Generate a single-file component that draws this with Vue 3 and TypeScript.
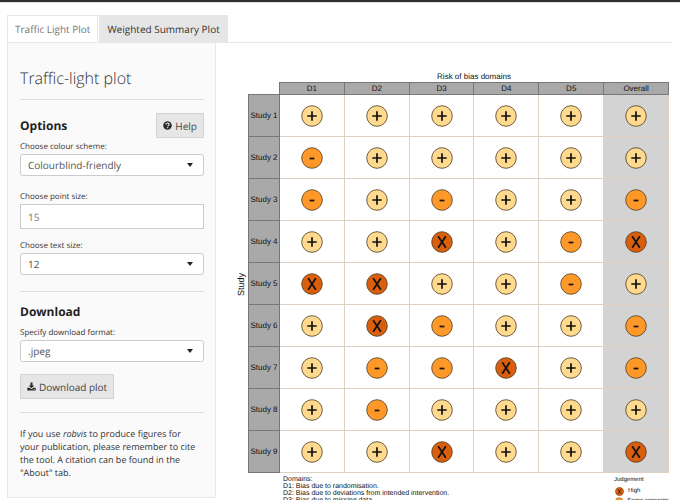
<script setup lang="ts">
import { ref } from 'vue'

type Judgement = '+' | '-' | 'X'

const domains: string[] = ['D1', 'D2', 'D3', 'D4', 'D5', 'Overall']

const studies: { name: string; marks: Judgement[] }[] = [
  '++++++',
  '-+++++',
  '-+-++-',
  '++X+-X',
  'XX++-+',
  '+X-++-',
  '+--X+-',
  '+-++++',
  '++X++X',
].map((row, i) => ({ name: `Study ${i + 1}`, marks: row.split('') as Judgement[] }))

const levels: Record<Judgement, string> = { '+': 'low', '-': 'some', X: 'high' }

const notes: string[] = [
  'D1: Bias due to randomisation.',
  'D2: Bias due to deviations from intended intervention.',
  'D3: Bias due to missing data.',
]

const legend: { mark: Judgement; label: string }[] = [
  { mark: 'X', label: 'High' },
  { mark: '-', label: 'Some concerns' },
]

const scheme = ref('Colourblind-friendly')
const pointSize = ref('15')
const textSize = ref('12')
const format = ref('.jpeg')
</script>

<template>
  <div class="page">
    <div class="navbar"></div>
    <nav class="tabs">
      <a href="#traffic" class="tab active">Traffic Light Plot</a>
      <a href="#summary" class="tab">Weighted Summary Plot</a>
    </nav>
    <div class="content">
      <aside class="sidebar">
        <h1>Traffic-light plot</h1>
        <hr />
        <div class="heading-row">
          <h2>Options</h2>
          <button type="button" class="btn">
            <svg class="icon" viewBox="0 0 16 16" aria-hidden="true">
              <circle cx="8" cy="8" r="7.6" fill="#2b2b2b" />
              <path d="M5.2 6.1C5.3 4.3 6.5 3.5 8.1 3.5c1.600 0 2.800.9 2.800 2.400 0 1.900-2.500 2-2.500 3.500" fill="none" stroke="#eee" stroke-width="2" />
              <circle cx="8.300" cy="11.800" r="1.300" fill="#eee" />
            </svg>
            Help
          </button>
        </div>
        <label for="scheme">Choose colour scheme:</label>
        <div class="select">
          <select id="scheme" v-model="scheme">
            <option>Colourblind-friendly</option>
            <option>Cochrane</option>
          </select>
        </div>
        <label for="point" class="next">Choose point size:</label>
        <input id="point" v-model="pointSize" type="text" inputmode="numeric" />
        <label for="text" class="after-input">Choose text size:</label>
        <div class="select">
          <select id="text" v-model="textSize">
            <option>12</option>
            <option>14</option>
          </select>
        </div>
        <hr class="mid" />
        <h2 class="download">Download</h2>
        <label for="format" class="format-label">Specify download format:</label>
        <div class="select">
          <select id="format" v-model="format">
            <option>.jpeg</option>
            <option>.png</option>
          </select>
        </div>
        <button type="button" class="btn save">
          <svg class="icon" viewBox="0 0 16 16" aria-hidden="true">
            <path d="M6.200 1h3.600v5h3.200L8 11 3 6h3.200z" fill="#2b2b2b" />
            <path d="M.5 10h4.200L8 13l3.300-3h4.200v5H.5z" fill="#2b2b2b" />
            <path d="M11.500 13.200h2.500" stroke="#eee" stroke-width="1" />
          </svg>
          Download plot
        </button>
        <hr class="last" />
        <p>
          If you use <em>robvis</em> to produce figures for your publication, please remember to
          cite the tool. A citation can be found in the "About" tab.
        </p>
      </aside>

      <main class="plot">
        <div class="axis">Study</div>
        <div class="figure">
          <table>
            <colgroup>
              <col class="name-col" />
              <col v-for="d in domains" :key="d" />
            </colgroup>
            <thead>
              <tr class="title">
                <td></td>
                <th :colspan="domains.length">Risk of bias domains</th>
              </tr>
              <tr class="domains">
                <td></td>
                <th v-for="d in domains" :key="d" scope="col">{{ d }}</th>
              </tr>
            </thead>
            <tbody>
              <tr v-for="study in studies" :key="study.name">
                <th scope="row">{{ study.name }}</th>
                <td v-for="(mark, i) in study.marks" :key="i">
                  <svg class="dot" :class="levels[mark]" viewBox="0 0 22 22" role="img" :aria-label="levels[mark]">
                    <circle cx="11" cy="11" r="10.300" />
                    <path v-if="mark === '+'" d="M11 6.300v9.400M6.300 11h9.400" />
                    <path v-else-if="mark === '-'" d="M8.600 11.500h4.800" />
                    <path v-else d="M7.200 5.300l7.600 11.400M14.800 5.300l-7.600 11.400" />
                  </svg>
                </td>
              </tr>
            </tbody>
          </table>
          <div class="caption">
            <div>
              <div>Domains:</div>
              <div v-for="n in notes" :key="n">{{ n }}</div>
            </div>
            <div class="legend">
              <div class="legend-title">Judgement</div>
              <div v-for="l in legend" :key="l.label" class="legend-item">
                <svg class="key" :class="levels[l.mark]" viewBox="0 0 22 22" aria-hidden="true">
                  <circle cx="11" cy="11" r="10.300" />
                  <path v-if="l.mark === '+'" d="M11 6.300v9.400M6.300 11h9.400" />
                  <path v-else-if="l.mark === '-'" d="M8.600 11.500h4.800" />
                  <path v-else d="M7.200 5.300l7.600 11.400M14.800 5.300l-7.600 11.400" />
                </svg>
                {{ l.label }}
              </div>
            </div>
          </div>
        </div>
      </main>
    </div>
  </div>
</template>

<style>
body {
  margin: 0;
  background: #fff;
}
</style>

<style scoped>
* {
  box-sizing: border-box;
}
.page {
  height: 100vh;
  overflow: hidden;
  font-family: 'Open Sans', sans-serif;
  font-size: 10px;
  text-rendering: geometricPrecision;
  color: #444;
}
.navbar {
  height: 2px;
  background: #303030;
  box-shadow: 0 1px 0 #ddd;
}
.tabs {
  display: flex;
  gap: 1px;
  margin: 13px 8px 0 7px;
  border-bottom: 1px solid #e8e8e8;
}
.tab {
  height: 27px;
  padding: 0 7px;
  border: 1px solid #e6e6e6;
  border-bottom: 0;
  background: #e6e6e6;
  color: #333;
  line-height: 26px;
  text-decoration: none;
  white-space: nowrap;
}
.tab.active {
  background: #fff;
  color: #777;
}
.content {
  display: flex;
  align-items: flex-start;
  padding-left: 7px;
}
.sidebar {
  flex: 0 0 209px;
  padding: 23px 11px 18px 12px;
  border: 1px solid #e8e8e8;
  border-top: 0;
  background: #fafafa;
}
h1,
h2,
p {
  margin: 0;
}
h1 {
  font-size: 16px;
  font-weight: 300;
  line-height: 24px;
  color: #333;
}
hr {
  height: 1px;
  margin: 9px 0 0;
  border: 0;
  background: #dedede;
}
hr.mid {
  margin-top: 16px;
}
hr.last {
  margin-top: 13px;
}
h2 {
  font-size: 12px;
  font-weight: 700;
  line-height: 18px;
  color: #222;
}
.heading-row {
  display: flex;
  align-items: center;
  justify-content: space-between;
  margin-top: 13px;
}
.btn {
  display: flex;
  align-items: center;
  gap: 3px;
  height: 25px;
  padding: 0 6px;
  border: 1px solid #d2d2d2;
  background: #e6e6e6;
  color: #444;
  font: inherit;
  text-rendering: inherit;
}
.icon {
  width: 9px;
  height: 9px;
}
label {
  display: block;
  margin-top: 3px;
  font-size: 8px;
  line-height: 12px;
  color: #333;
}
label.next {
  margin-top: 15px;
}
label.after-input {
  margin-top: 11px;
}
label.format-label {
  margin-top: 6px;
}
.select {
  position: relative;
  margin-top: 1px;
}
.select::after {
  content: '';
  position: absolute;
  top: 9px;
  right: 11px;
  border: 3px solid transparent;
  border-top: 4px solid #222;
  border-bottom: 0;
  pointer-events: none;
}
select,
input {
  display: block;
  width: 100%;
  height: 22px;
  padding: 0 7px;
  border: 1px solid #ccc;
  border-radius: 3px;
  background: #fff;
  color: #555;
  font: inherit;
  text-rendering: inherit;
  appearance: none;
}
input {
  height: 25px;
  margin-top: 1px;
  border-radius: 0;
  color: #777;
}
.download {
  margin-top: 11px;
}
.save {
  margin-top: 12px;
}
p {
  margin-top: 14px;
  padding-right: 6px;
  font-size: 9px;
  line-height: 13px;
  color: #333;
}
.plot {
  flex: 1;
  display: flex;
  align-items: flex-start;
  min-width: 0;
  padding: 29px 11px 0 19px;
  font-family: 'Liberation Sans', sans-serif;
  color: #111;
}
.axis {
  flex: 0 0 13px;
  height: 424px;
  font-size: 9px;
  line-height: 13px;
  text-align: center;
  writing-mode: vertical-rl;
  transform: rotate(180deg);
}
.figure {
  flex: 1;
  min-width: 0;
}
table {
  width: 100%;
  table-layout: fixed;
  border-collapse: collapse;
}
.name-col {
  width: 31px;
}
th,
td {
  padding: 0;
  font-weight: 400;
  text-align: center;
}
.title th {
  height: 10px;
  font-size: 8px;
  line-height: 10px;
}
.domains th {
  height: 12px;
  border: 1px solid #777;
  background: #a9a9a9;
  font-size: 8px;
  line-height: 11px;
}
tbody th {
  height: 42px;
  border: 1px solid #777;
  background: #a9a9a9;
  font-size: 8px;
  white-space: nowrap;
}
tbody td {
  border: 1px solid #ddd0c2;
}
tbody td:last-child {
  background: #d3d3d3;
}
.dot {
  display: block;
  width: 22px;
  height: 22px;
  margin: 0 auto;
}
.key {
  width: 9px;
  height: 9px;
}
circle {
  stroke: #4d3c20;
  stroke-width: 0.8;
}
.btn circle {
  stroke: none;
}
.low circle {
  fill: #fed98e;
}
.some circle {
  fill: #fe9929;
}
.high circle {
  fill: #d95f0e;
}
.dot path,
.key path {
  fill: none;
  stroke: #111;
  stroke-width: 1.7;
}
.caption {
  display: flex;
  justify-content: space-between;
  padding: 3px 0 0 35px;
  font-size: 7px;
  line-height: 7px;
}
.legend {
  width: 55px;
  font-size: 6px;
  white-space: nowrap;
}
.legend-title {
  margin-bottom: 2px;
  line-height: 8px;
}
.legend-item {
  display: flex;
  align-items: center;
  gap: 4px;
  height: 10px;
  padding-left: 1px;
}
</style>
